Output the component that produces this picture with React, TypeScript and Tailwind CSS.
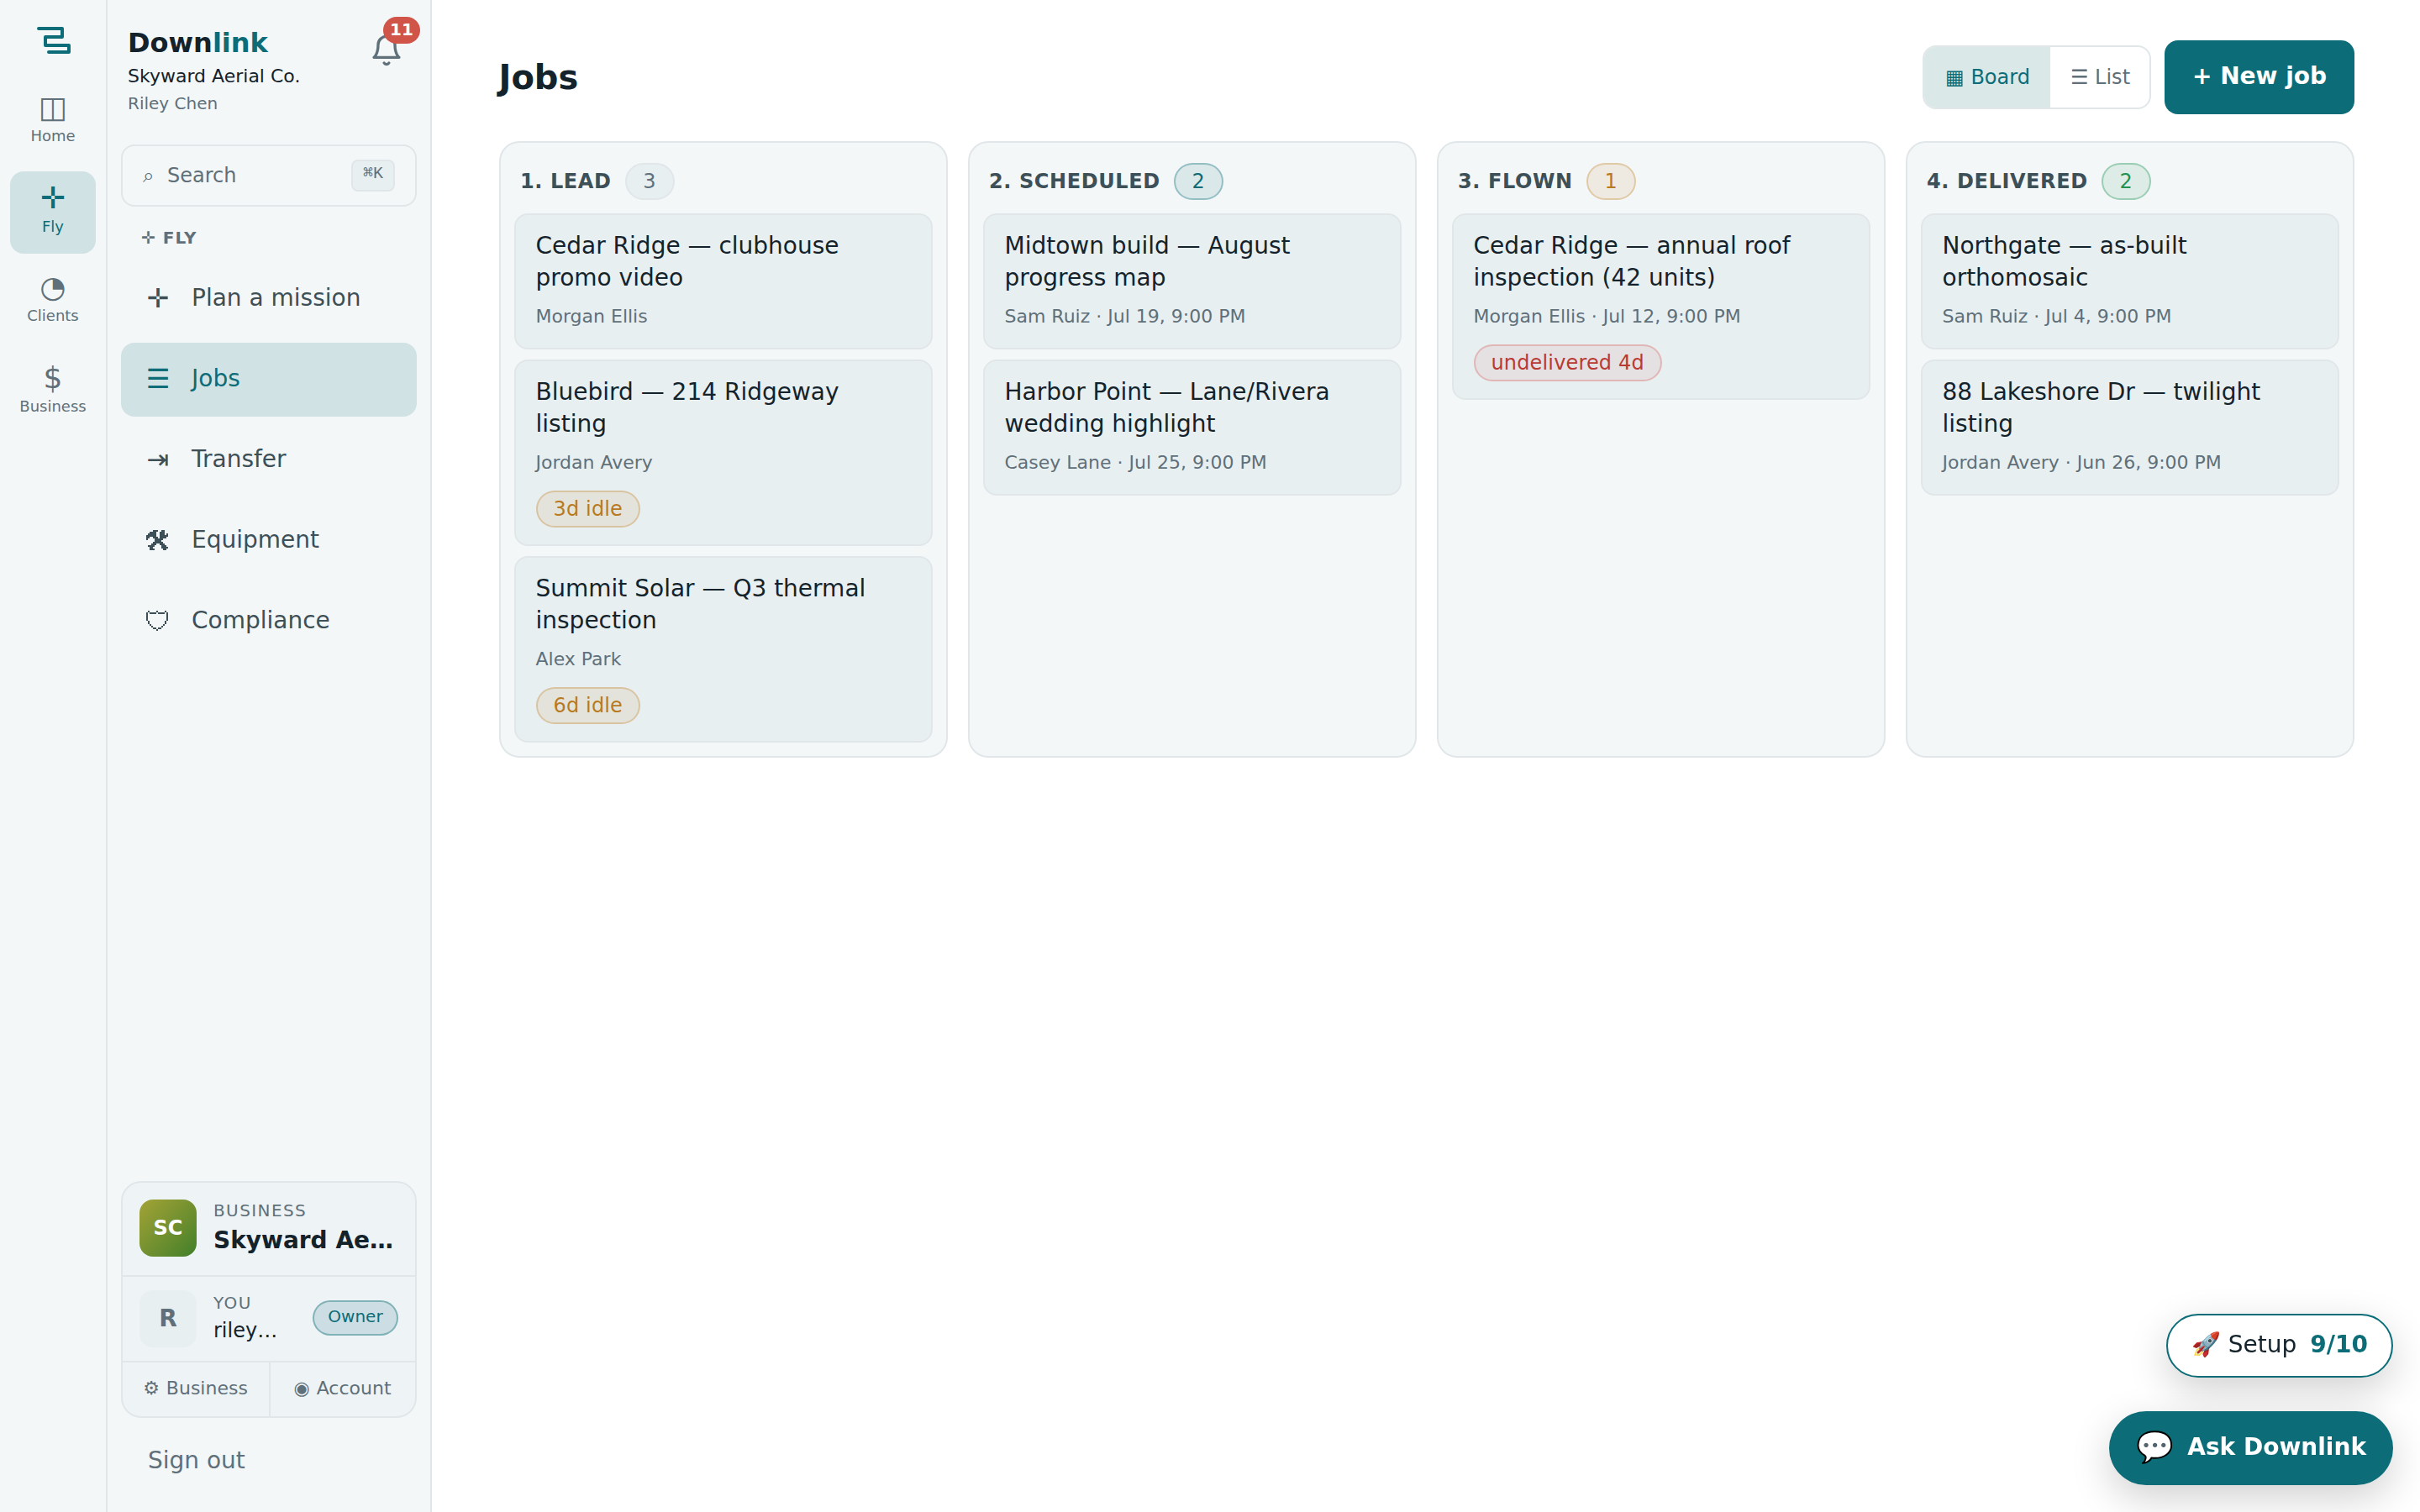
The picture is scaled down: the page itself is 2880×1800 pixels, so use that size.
const TOOLS = [
  '....###..##..',
  '..####..###..',
  '.#####..###.#',
  '######..#####',
  '##..###.####.',
  '#....#####...',
  '.....####....',
  '....######...',
  '...###..###..',
  '.####....###.',
  '..##.....####',
  '..###.....##.',
];

const SHIELD = [
  '.#....#....#.',
  '#.####.####.#',
  '#...........#',
  '#...........#',
  '#...........#',
  '#...........#',
  '.#.........#.',
  '.#.........#.',
  '..#.......#..',
  '...#.....#...',
  '....##.##....',
  '......#......',
];

function PixelIcon({ rows }: { rows: string[] }) {
  return (
    <svg
      width="26"
      height="24"
      viewBox="0 0 13 12"
      fill="currentColor"
      shapeRendering="crispEdges"
      className="mr-0.5"
    >
      {rows.flatMap((row, y) =>
        [...row].map((cell, x) => cell === '#' && <rect key={`${x}-${y}`} x={x} y={y} width="1" height="1" />),
      )}
    </svg>
  );
}

const railItems = [
  { icon: '◫', label: 'Home' },
  { icon: '✛', label: 'Fly', active: true },
  { icon: '◔', label: 'Clients' },
  { icon: '$', label: 'Business' },
];

const navItems = [
  { icon: '✛', label: 'Plan a mission' },
  { icon: '☰', label: 'Jobs', active: true },
  { icon: '⇥', label: 'Transfer' },
  { icon: <PixelIcon rows={TOOLS} />, label: 'Equipment' },
  { icon: <PixelIcon rows={SHIELD} />, label: 'Compliance' },
];

type Tone = 'neutral' | 'info' | 'warn' | 'ok' | 'danger';

interface Job {
  title: string;
  meta: string;
  flag?: { text: string; tone: Tone };
}

const columns: { title: string; tone: Tone; jobs: Job[] }[] = [
  {
    title: '1. LEAD',
    tone: 'neutral',
    jobs: [
      { title: 'Cedar Ridge — clubhouse promo video', meta: 'Morgan Ellis' },
      {
        title: 'Bluebird — 214 Ridgeway listing',
        meta: 'Jordan Avery',
        flag: { text: '3d idle', tone: 'warn' },
      },
      {
        title: 'Summit Solar — Q3 thermal inspection',
        meta: 'Alex Park',
        flag: { text: '6d idle', tone: 'warn' },
      },
    ],
  },
  {
    title: '2. SCHEDULED',
    tone: 'info',
    jobs: [
      { title: 'Midtown build — August progress map', meta: 'Sam Ruiz · Jul 19, 9:00 PM' },
      { title: 'Harbor Point — Lane/Rivera wedding highlight', meta: 'Casey Lane · Jul 25, 9:00 PM' },
    ],
  },
  {
    title: '3. FLOWN',
    tone: 'warn',
    jobs: [
      {
        title: 'Cedar Ridge — annual roof inspection (42 units)',
        meta: 'Morgan Ellis · Jul 12, 9:00 PM',
        flag: { text: 'undelivered 4d', tone: 'danger' },
      },
    ],
  },
  {
    title: '4. DELIVERED',
    tone: 'ok',
    jobs: [
      { title: 'Northgate — as-built orthomosaic', meta: 'Sam Ruiz · Jul 4, 9:00 PM' },
      { title: '88 Lakeshore Dr — twilight listing', meta: 'Jordan Avery · Jun 26, 9:00 PM' },
    ],
  },
];

const tones: Record<Tone, string> = {
  neutral: 'bg-[#e8eff1] border-[#e1e7e9] text-[#5f707a]',
  info: 'bg-[#0c6d78]/10 border-[#0c6d78]/35 text-[#0c6d78]',
  warn: 'bg-[#c27c1a]/10 border-[#c27c1a]/30 text-[#b87a1e]',
  ok: 'bg-[#1f9254]/10 border-[#1f9254]/35 text-[#1f9254]',
  danger: 'bg-[#c8382f]/8 border-[#d13c32]/25 text-[#b93a32]',
};

function Pill({ tone, children }: { tone: Tone; children: React.ReactNode }) {
  return (
    <span
      className={`inline-flex h-11 min-w-[59px] items-center justify-center rounded-full border-2 px-[19px] text-2xl leading-7 tracking-[0.15px] ${tones[tone]}`}
    >
      {children}
    </span>
  );
}

function Rail() {
  return (
    <nav className="flex w-32 shrink-0 flex-col border-r-2 border-[#e1e7e9] pl-3">
      <svg width="114" height="96" viewBox="12 0 114 96" fill="none" className="shrink-0">
        <path
          d="M46 34H74V44H54V54H82V62H58"
          stroke="#0c6d78"
          strokeWidth="4"
          strokeLinecap="round"
          strokeLinejoin="round"
        />
      </svg>
      <div className="flex flex-col gap-2">
        {railItems.map(({ icon, label, active }) => (
          <div
            key={label}
            className={`flex h-[98px] w-[102px] flex-col items-center gap-0.5 rounded-2xl pt-[11px] even:mt-0.5 ${
              active ? 'bg-[#d0e2e4] text-[#0c6d78]' : 'text-[#5f707a]'
            }`}
          >
            <span className="h-[42px] text-4xl leading-[42px]">{icon}</span>
            <span className="text-[18px] leading-[21px]">{label}</span>
          </div>
        ))}
      </div>
    </nav>
  );
}

function Sidebar() {
  return (
    <aside className="flex w-[386px] shrink-0 flex-col border-r-2 border-[#e1e7e9] px-4">
      {/* Brand */}
      <div className="flex h-[172px] shrink-0 justify-between pt-8 pl-2">
        <div>
          <p className="text-[32px] leading-[38px] font-bold">
            Down<span className="text-[#0c6d78]">link</span>
          </p>
          <p className="mt-1 text-[22px] leading-[33px]">Skyward Aerial Co.</p>
          <p className="mt-px text-xl leading-[30px] text-[#5f707a]">Riley Chen</p>
        </div>
        <div className="relative mt-2 mr-4 h-10 w-10">
          <svg
            width="40"
            height="40"
            viewBox="0 0 24 24"
            fill="none"
            stroke="#5f707a"
            strokeWidth="2"
            strokeLinecap="round"
            strokeLinejoin="round"
          >
            <path d="M18 8a6 6 0 0 0-12 0c0 7-3 9-3 9h18s-3-2-3-9" />
            <path d="M13.73 21a2 2 0 0 1-3.46 0" />
          </svg>
          <span className="absolute -top-5 left-4 flex h-8 w-11 items-center justify-center rounded-full bg-[#d15449] pb-0.5 text-xl leading-6 font-bold text-white">
            11
          </span>
        </div>
      </div>

      {/* Search */}
      <div className="flex h-[74px] shrink-0 items-center rounded-2xl border-2 border-[#e1e7e9] px-6 text-2xl text-[#5f707a]">
        <span className="w-[29px]">⌕</span>
        <span className="flex-1">Search</span>
        <kbd className="flex h-[38px] w-[52px] justify-center rounded-lg border-2 border-[#e1e7e9] bg-[#e8eff1] font-['Liberation_Mono','DejaVu_Sans_Mono',monospace] text-xl leading-[30px]">
          ⌘K
        </kbd>
      </div>

      <p className="h-[66px] shrink-0 pt-[25px] pl-6 text-xl leading-6 font-bold tracking-[1px] text-[#5f707a]">
        ✛ FLY
      </p>

      {/* Navigation */}
      <div className="flex flex-1 flex-col gap-2">
        {navItems.map(({ icon, label, active }) => (
          <div
            key={label}
            className={`flex h-[88px] items-center gap-6 rounded-2xl pb-[3px] pl-7 text-[28px] leading-[42px] ${
              active ? 'bg-[#d0e2e4] text-[#0c6d78]' : 'text-[#3d4f57]'
            }`}
          >
            <span className="flex w-8 justify-center text-[32px]">{icon}</span>
            <span>{label}</span>
          </div>
        ))}
      </div>

      {/* Account */}
      <div className="flex flex-col rounded-3xl border-2 border-[#e1e7e9] bg-[#eef3f6]">
        <div className="flex h-28 gap-5 border-b-2 border-[#e1e7e9] px-5 pt-5">
          <div className="flex h-[68px] w-[68px] shrink-0 items-center justify-center rounded-2xl bg-linear-135 from-[#a3a336] to-[#3f7f2a] text-2xl font-bold text-white">
            SC
          </div>
          <div className="-mt-0.5">
            <p className="text-xl leading-[30px] tracking-[1.4px] text-[#5f707a]">BUSINESS</p>
            <p className="text-[28px] leading-[42px] font-bold whitespace-nowrap">Skyward Ae…</p>
          </div>
        </div>
        <div className="flex h-[102px] gap-5 border-b-2 border-[#e1e7e9] px-5 pt-4">
          <div className="flex h-[68px] w-[68px] shrink-0 items-center justify-center rounded-2xl bg-[#e8eff1] text-[28px] font-bold text-[#5f707a]">
            R
          </div>
          <div className="flex-1">
            <p className="text-xl leading-[30px] tracking-[1.4px] text-[#5f707a]">YOU</p>
            <p className="text-2xl leading-9">riley…</p>
          </div>
          <span className="mt-3 flex h-[42px] w-[102px] justify-center rounded-full border-2 border-[#0c6d78]/40 bg-[#0c6d78]/15 text-xl leading-[34px] text-[#0c6d78]">
            Owner
          </span>
        </div>
        <div className="flex h-16 text-[22px] leading-[61px] [word-spacing:1px] text-[#5f707a]">
          <span className="w-44 border-r-2 border-[#e1e7e9] pr-px text-center">⚙ Business</span>
          <span className="flex-1 pr-px text-center">◉ Account</span>
        </div>
      </div>

      <p className="h-28 pt-[30px] pl-8 text-[28px] leading-[42px] text-[#5f707a]">Sign out</p>
    </aside>
  );
}

function JobCard({ job }: { job: Job }) {
  return (
    <div className="rounded-2xl border-2 border-[#e1e7e9] bg-[#e8eff1] px-6 pt-[18px] pb-5">
      <p className="text-[28px] leading-[38px]">{job.title}</p>
      <p className="mt-[9px] h-[35px] text-[22px] leading-9 text-[#5f707a]">{job.meta}</p>
      {job.flag && (
        <div className="mt-4 flex">
          <Pill tone={job.flag.tone}>{job.flag.text}</Pill>
        </div>
      )}
    </div>
  );
}

export default function App() {
  return (
    <div className="flex h-[1800px] w-[2880px] overflow-hidden bg-white font-['DejaVu_Sans',sans-serif] text-[#14232b]">
      <div className="flex shrink-0 bg-[#f3f7f8]">
        <Rail />
        <Sidebar />
      </div>

      <main className="flex-1 pt-12 pr-[78.5px] pl-[79.5px]">
        <header className="flex h-[88px] items-center">
          <h1 className="flex-1 text-[40px] leading-[46px] font-bold">Jobs</h1>
          <div className="flex h-[76px] w-[272px] overflow-hidden rounded-2xl border-2 border-[#e1e7e9] text-center text-2xl leading-[72px]">
            <span className="w-[150px] bg-[#dae8e8] pl-0.5 text-[#0c6d78]">▦ Board</span>
            <span className="flex-1 pl-0.5 text-[#5f707a]">☰ List</span>
          </div>
          <button className="ml-4 h-[88px] w-[226px] rounded-2xl bg-[#0c6d78] pb-[3px] pl-px text-[28px] leading-[84px] font-bold text-white">
            + New job
          </button>
        </header>

        <div className="mt-8 grid grid-cols-4 gap-6">
          {columns.map((column) => (
            <section
              key={column.title}
              className="flex h-[734px] flex-col gap-3 rounded-3xl border-2 border-[#e1e7e9] bg-[#f3f7f8] p-4"
            >
              <div className="mt-2 mb-1 flex h-11 items-center gap-4 pl-[7.5px] text-2xl font-bold tracking-[0.6px] text-[#3d4f57]">
                {column.title}
                <span className="flex font-normal">
                  <Pill tone={column.tone}>{column.jobs.length}</Pill>
                </span>
              </div>
              {column.jobs.map((job) => (
                <JobCard key={job.title} job={job} />
              ))}
            </section>
          ))}
        </div>
      </main>

      {/* Floating actions */}
      <div className="fixed right-8 bottom-8 flex flex-col items-end gap-10">
        <button className="flex h-[76px] items-center gap-4 rounded-full border-2 border-[#0c6d78] bg-white px-7 pb-[3px] text-[28px] leading-[42px] shadow-[0_16px_48px_rgba(0,0,0,0.18)]">
          <span>🚀 Setup</span>
          <span className="font-bold text-[#0c6d78]">9/10</span>
        </button>
        <button className="flex h-[88px] items-center gap-4 rounded-full bg-[#0c6d78] px-8 pb-[3px] text-[28px] leading-[42px] font-bold text-white shadow-[0_16px_48px_rgba(0,0,0,0.18)]">
          <span className="text-4xl leading-[42px] font-normal">💬</span>
          <span>Ask Downlink</span>
        </button>
      </div>
    </div>
  );
}
